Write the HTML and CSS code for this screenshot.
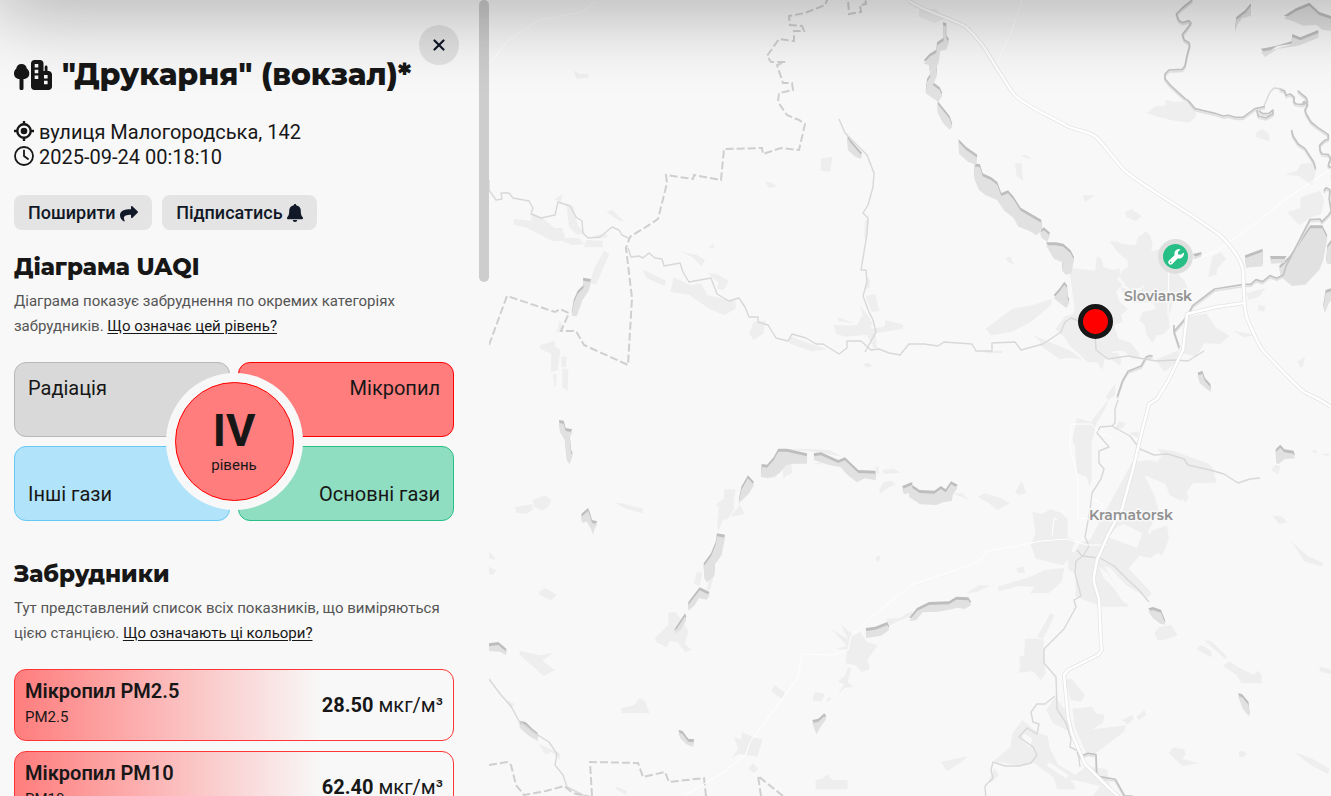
FILE: index.html
```html
<!DOCTYPE html>
<html lang="uk">
<head>
<meta charset="utf-8">
<title>"Друкарня" (вокзал)*</title>
<link rel="stylesheet" href="styles.css">
</head>
<body>
<div class="app">
  <aside class="panel">
    <div class="panel-content">
      <button class="close" type="button" aria-label="Закрити">
        <svg viewBox="0 0 12 12" width="12" height="12"><path d="M1.500 1.500l9 9M10.500 1.500l-9 9" fill="none" stroke="currentColor" stroke-width="2.200" stroke-linecap="round"/></svg>
      </button>
      <h1 class="title">
        <svg class="title-icon" viewBox="0 0 38 30" width="38" height="30"><path fill="currentColor" fill-rule="evenodd" d="M7.500 4c3 0 5 2 5.300 4.500 1.700 1.200 2.500 3 2.500 5 0 3.200-2.400 5.500-5.500 5.500h-.3v9.200a2 2 0 0 1-4 0V19h-.3C2.300 19 0 16.700 0 13.500c0-2 .8-3.800 2.300-5C2.600 6 4.500 4 7.500 4zM20.500 0h5.500c2 0 3.500 1.500 3.500 3.500V11h1.200V7a1.400 1.400 0 0 1 2.800 0v4h1c1.900 0 3.500 1.600 3.500 3.500v12c0 2-1.500 3.500-3.500 3.500h-14c-2 0-3.500-1.500-3.500-3.500v-23C17 1.500 18.500 0 20.500 0zm.2 4v3.600h3.600v-3.600zm0 5.700v3.600h3.600v-3.600zm0 5.700v3.600h3.600v-3.600zM30 15v3.600h3.600v-3.600zm0 5.700v3.600h3.600v-3.600z"/></svg>
        "Друкарня" (вокзал)*</h1>
      <div class="meta">
        <p><svg viewBox="0 0 20 20" width="20" height="20"><g fill="none" stroke="currentColor" stroke-width="2.400"><circle cx="10" cy="10" r="6.700"/><path d="M10 0v4M10 16v4M0 10h4M16 10h4"/></g><circle cx="10" cy="10" r="3.300" fill="currentColor"/></svg> вулиця Малогородська, 142</p>
        <p><svg viewBox="0 0 20 20" width="20" height="20"><g fill="none" stroke="currentColor" stroke-width="1.800" stroke-linecap="round"><circle cx="10" cy="10" r="9"/><path d="M10 4.500V10l4 3"/></g></svg> 2025-09-24 00:18:10</p>
      </div>
      <div class="actions">
        <button class="action" type="button">Поширити <svg viewBox="0 0 18 16" width="18" height="16"><path fill="currentColor" d="M11 .8c0-.8.8-1 1.300-.6l5.300 5.100c.5.500.5 1 0 1.500l-5.300 5.100c-.5.500-1.300.2-1.300-.6V8.800C6.500 8.800 4 9.800 3.900 12c0 1.300.5 2 .8 2.700.2.600-.4 1-.9.600C1.500 13.800 0 11.900 0 9.400 0 4.800 4 3.400 11 3.300z"/></svg></button>
        <button class="action" type="button">Підписатись <svg viewBox="0 0 16 18" width="16" height="18"><path fill="currentColor" d="M8 0c.7 0 1.200.5 1.200 1.200 2.800.5 4.600 2.600 4.600 5.600 0 4.200 1 5.400 1.900 6.500.7.900.1 1.900-.9 1.900H1.200c-1 0-1.600-1-.9-1.900C1.200 12.200 2.200 11 2.200 6.800c0-3 1.800-5.100 4.600-5.600C6.800.5 7.300 0 8 0zM5.800 16h4.400c0 1.200-1 2-2.200 2s-2.200-.8-2.200-2z"/></svg></button>
      </div>

      <section class="section">
        <h2 class="heading">Діаграма UAQI</h2>
        <p class="note">Діаграма показує забруднення по окремих категоріях забрудників. <a href="#level">Що означає цей рівень?</a></p>
        <div class="diagram">
          <div class="cell radiation">Радіація</div>
          <div class="cell dust">Мікропил</div>
          <div class="cell other-gas">Інші гази</div>
          <div class="cell main-gas">Основні гази</div>
          <div class="level"><strong>IV</strong><span>рівень</span></div>
        </div>
      </section>

      <section class="section">
        <h2 class="heading">Забрудники</h2>
        <p class="note">Тут представлений список всіх показників, що виміряються цією станцією. <a href="#colors">Що означають ці кольори?</a></p>
        <ul class="pollutants">
          <li class="card"><div><h3>Мікропил PM2.5</h3><small>PM2.5</small></div><p><b>28.50</b> мкг/м³</p></li>
          <li class="card"><div><h3>Мікропил PM10</h3><small>PM10</small></div><p><b>62.40</b> мкг/м³</p></li>
        </ul>
      </section>
    </div>
    <div class="track"><div class="thumb"></div></div>
  </aside>

  <main class="map">
    <svg class="tiles" viewBox="489 0 842 796" preserveAspectRatio="xMinYMin slice" aria-label="Мапа">
      <defs>
        <g id="woods">
          <g transform="translate(489 0) scale(.3333)">
            <path d="M282 833l24 4-6 25-20 30-14 40-4 8-14-2 6-38 12-28 18-18z"/>
            <path d="M1075 403l8 14 20 23 16 18-4 10-18-8-20-18z"/>
          </g>
          <g transform="translate(909 0) scale(.3333)">
            <path d="M102 67l10 3v36l8 12-8 22-20 5-2 30-8 20 2 22-12 30 20 14 8 18-12 18-38-26 4-34 10-16-4-34-16-6 18-20 20-12 2-22 20-14z"/>
            <path d="M86 303l20 25 16 20 8 24-8 8-20-20-16-30z"/>
            <path d="M149 418l22 22 34 24-4 22-24-10-27-24zM197 490l16 3 8 27 26 12 18 14 12 33 20-8 16 18 22 34 62 36 1 24-16 14-22-14-32-12-14-26-28-22-22-32-34-14-20-16-14-34zM393 690l12-8 18 16-8 18-16-10zM411 727l30 0 22 4 22 20 10 20-8 40-16 4-12-12 2-25-26-10z"/>
            <path d="M466 845l8 10 2 32 5 12-8 16-14-10-25-20 18-20z"/>
            <path d="M1026 10v28l-26 8-14 18-8 25 4-38 26-20zM1125 47l36-22 40-17 30 28 35 12v36l-26-4-18-14-40 2-32-14zM1056 146l44-8 48-14 2-22 24 10 54-22v14l-60 24-64 10-36 24z"/>
            <path d="M1008 766l53-20v44l-50 4zM1083 768h50l-8 12-38 2zM1204 676l36 0 15 30-12 65-12 30-42 44-40 4-34-28-4-24 30-28 30-44zM1255 735l15-20v70l-18-4zM1250 870l20-6v24l-10 12-12 30-5-14z"/>
            <path d="M866 1118l14-6 8 22 16 18 2 16-16-12-18-16zM852 762l26-6-2 9-18 6z"/>
          </g>
          <g transform="translate(489 400) scale(.3333)">
            <path d="M210 60l14 2 6 22 20 4-8 16 4 44 5 12-10 24-8-14-6-60-14-22zM277 342l20-18 6 14 6 22 16 4-10 16-2 16-8-20-12-20-14 3z"/>
            <path d="M818 192l16 2 20-22 14-26h26l60 14v22h-40l-22 4-20 24-16 10-20 5-20-3zM974 160l22-3 52 23 20-8 40 38 52 2v20l-32-6-24 12-28-22-22-24-34-6-44-14zM777 226l18 20-14 24-32 32 8-42zM1240 258l30-12v22l-26 6z"/>
            <path d="M684 400l24 4-10 52-20 28-2 34-22 20-8-12-2-36 22-30 14-34zM632 562l30 14-8 14-24-4-14 22-18 16v-18zM588 640l4 10-16 30-22 12z"/>
            <path d="M0 730l28-4 24 20v10l-20-10-32-2zM92 962l18 4 22 22 14 10v16l-26-15-28-25zM568 990l12 2 18 24 18 2-4 14-20-8-18-18zM970 960l18-4 18-16 6 8-16 22-14 24zM1131 684l28-4 36-14 6 14-24 18-46 7z"/>
          </g>
          <g transform="translate(909 400) scale(.3333)">
            <path d="M0 248l32 22 44 2 20-14 14 10 16-24 20 10-14 20-4 20-26 4-20 8-48-2-34-22zM0 654l24-30 36-18 60-2 22-14 36 2 9 14-20 12-22-4-24 6-32 6-48 2-20 24z"/>
            <path d="M718 625l14-4 24 8 14 36-16-3-22-16zM987 880l12 2 20 24 3 36-20-24zM1100 148l14-14 12 14 28 4 4 14-30 2-20 16-6-4z"/>
          </g>
        </g>
        <g id="creeks" fill="none" stroke-linejoin="round">
          <g transform="translate(909 0) scale(.3333)" stroke-width="5">
            <path d="M850 0l-30 24-18 18 8 20 12 6 18-6 6 8-12 16-14 18 6 16 14 8 2 10-8 30-6 30-8 10-40 2-12 12v14l18 22 42 38 10 6 20 24 60 14 24 8 16-2 20 6h24l36-26 30-6"/>
            <path d="M1112 268l14 4 6 14 12-4 12 10-2 14 8 6 16 2 8-10 10 10-8 16 4 12 14 24 20 16 32 22v14l-12 4-14 14 2 18 6 8 18 2 8 12-6 12-2 10 12 8-2 28M1148 390l4 18 16 24 20 14 26 40 6 20"/>
            <path d="M1044 330l4 18 22 6 22-12v-12l-12 10-18 1-12-8M1166 272l26 22 4 12-14 8"/>
            <path d="M795 995l26-30 18-24 12-24 66-50 88-14 20 0 16-14 20 6 22-18 20 8 20-10 8-26 72-140 30-2 6 8 20-20 8-12-6-36 2-28-12-6-6 10M795 975v20l16 48M625 1190l16-48 16-28 40-16 14-26 10-5 10 1"/>
          </g>
          <g transform="translate(909 400) scale(.3333)" stroke-width="5"><path d="M505 1056l8 14 24-10 24 4 2 56 8 10 48 8 28 50h24"/></g>
        </g>
        <g id="roads" fill="none" stroke-linejoin="round">
          <path d="M909 1c18 12 43 17 57 26 20 18 25 34 36 49 5 8 10 18 16 22 17 13 32 18 49 28 10 5 20 4 29 11 12 12 20 25 29 34 25 20 60 38 96 65 14 14 20 24 22 34 1 15 0 35 4 48 4 10 10 25 17 34 15 15 28 30 40 40 8 4 18 8 27 15"/>
          <path d="M1244 303l-28 4-29 7-1 10-3 26-15 31-11 18-8 5-7 27-9 38-11 40-14 26-11 25-3 16 0 6 5 17 2 45 1 6-4 5-30 15-4 5 4 42 4 17 13 30 24 24 39 35"/>
        </g>
      </defs>

      <g class="land">
        <g transform="translate(489 0) scale(.3333)">
          <path d="M74 656l52 6 4-24 36 20 30 26 24 0 8 30 42 0 16 18-36 4-30-14-30 2-52-28-30-14-34-8zM232 612l22 6 12 58 22 24-24 4-24-24zM284 742l8-22 50 2-2 20zM320 706l32-6 4 12-30 4zM352 636l18-6 34 32-10 2zM346 752l15 10-40 92-18-6 12-42zM196 598l26-16-8 24zM253 210l16 12 30 0v10l-36 4z"/>
          <path d="M460 808l72 34-6 16-54-24zM544 876l10-44 52 24 30-6 20 36 84 18 0 22-34 20-46-20-60-42-36-6zM574 755l50 10 24 14-10 20-28-28zM656 820l26 2 38 20-16 28-20-4 4-18zM657 742l18-10 0 12zM996 476l35-6-8 45-28-2zM828 547l18 0 18 12-22 6zM780 1000l14-34 36-4-6 38-30 20zM900 1008l56 20 60 20-50 6-66-24zM1034 976l70 0 16-30 30 40 36-6 4-20 54 14-4 12-80 14 4 44-10 0-20-40-64 6-28-8zM1048 952l46 18-46-8zM1130 888l28-6 14 50-24 4zM1112 914l30 40 10 20-20 6zM1124 1092l16-4 10 12-20 2zM1128 660h12l-8 55h-6zM1132 832l12 8-2 24-16 4z"/>
          <path d="M152 1036l46-14 0 18 16 10-8 60-20 6 0-54-30-14zM218 1068l16 4-4 30h-12zM220 1106l18 0-2 66-16-10zM192 1122l10 0 0 36h-6zM212 960l10 22-20 20z"/>
        </g>
        <g transform="translate(909 0) scale(.3333)">
          <path d="M30 30l50-4 26 30-30 14-46-20zM714 338l22-18 34-4 0-16 30 6 24-2 34 20 4 24-20 20-46-6-60-14zM1040 400l20-14 22 18-2 20-38-12zM1128 524l36-12 12-20 34-4 10 32-10 36-40-28zM1134 636l40-12 0-32 60-20 12 30-10 40-24 8-42 26zM336 466l16-2 16 12-12 0zM318 490l20 0 4 54-20-18zM520 586l38 0-30 20zM648 636l20-8 30 20-18 16-28-14zM290 776l12-8 16 28-20-10z"/>
          <path d="M230 986l80-60 60-10 60-20-4 20-60 50-60 30-60 10zM370 1004l110 46 40 28-70-6zM832 950l60-10 30 44 40 24-30 24-46-2-24 40-40-10zM898 830l12-60 24-14 18 20-26 28-4 20zM972 992l44 8 18 6-30 6zM1010 880l60-16-20 26-30 10zM1048 914l20 4-2 18-18-6zM1166 1084l22-14-6 30-10 2zM230 1052h52l-4 8h-50zM740 1080l70-30-10 40-34 26zM590 1190l30-40-2 36-20 14z"/>
        </g>
        <g transform="translate(1040 220) scale(.3333)">
          <path d="M208 64l20 0 20 8 38 4 8-24 24-18 12 12 8 24-4 24 26-6 12 20 30 40-4 30-36 2-14 22-28-14-20 16-32 4-28-34 4-18 20-16-2-20-26-20z"/>
          <path d="M86 142l26 4 54 6 4-42 14 4 6 26 26 10 22-4 4 20-12 12 18 16-20 20 10 30 26 24-20 16 4 22-26 10 14 40 36 12 24 30 4 20-24-2-24-24-32 2-26 26-8 30-12-22-32-2-20-20-30-26-20-30-26-22 30-40 24-6 4-20z"/>
          <path d="M306 150l50-10 14 14 30-8 14 16 20 20 10 26-20 24-24 12-14 44 2 36-20 20-18 2-12 22-18-22-6-30-16-16 10-24 40-10-10-20-60 4 10-30 24-20z"/>
          <path d="M0 364l40 16 60 30-40 8-60-42zM150 402l84-4 10 22-4 18-26-20zM240 200l20 6-10 16z"/>
        </g>
        <g transform="translate(489 400) scale(.3333)">
          <path d="M78 322l50-10 6 14-20 16-32-4zM132 300l36-14 18 14-6 18-20 14-26-12zM378 308l20 2 64 16-2 14-50-14zM0 456l18 16-2 8-16-6zM0 500l22 10-10 14-12-2zM150 576l18-12 36 20-18 18-34-18zM92 752l60 14 42-8-34 24 38 28-34 18-72-64zM396 924l38-8 18-22 16 10 14 36-84 0zM378 1166l8-6 28 14-2 10zM846 874l12-18 30 22-10 18zM972 890l6-14 30 6-10 22-26-2zM1012 900l10-10 4 8-8 8zM1158 476l10-10 8 8-10 12zM980 1140l20-4 16-14 14 18 46 0v28h-96zM735 1010l22 10 2-24 34 16 28 6-16 52-26-4-30-4-20 12 18-28zM778 1106l14-18 16 18-12 14zM50 900l28 12-14 14zM146 1030l44 20 24 10-2 20-24-24-18 8z"/>
          <path d="M706 268l34 0-6 36 2 22-20 32-14 2-14 34-4-16 6-58-10-6 24-18zM722 350l32-36 12 28-28 6zM614 550l10-34 16 2-8 40zM664 522l14-4-14 50-12 4zM498 714l40-40 0-36 22-2 20 26 18 30-10 40 20 18-20 6-22-30-24-4-8 20-32-16zM880 200l26-10 4 30-20 8-6 12zM830 236l40-18-10 14zM890 148l50-2 80 4 40 20-80-14zM1180 210l34-4 22 12-50 4zM1158 200l12 0-2 30zM1170 270l14-24 24-4 12 12-20 8-26 20zM974 190l30-4-14 8z"/>
          <path d="M1070 790l4-40-30-4 30-8-46-50 50 30-24-46 40 34 20-10 20 30 32 10-30 42 6 30-24 8-18-20zM1046 886l20-34-20-6 22-20 10-26 8 6-10 40 18 14-28 4zM1194 656l40-2 20-14 18-6-4 14-50 20-24 12z"/>
        </g>
        <g transform="translate(909 400) scale(.3333)">
          <path d="M598 0l-22 26-30 40-30-8-12-4-14 66 8 20 6 80 28 10 10 30 6-20 0-110 14-60 30-50zM616 90l14-26 22 6-12 14zM660 100l28-6 0 20z"/>
          <path d="M670 186l54-6 20 6 16-20-14-20 44 6 106 38 16 14 10 44-70 2-14 20-4 8-18 24-34-16-12-34-64-26 30 60 14 50-30 60 54-20 6 40-20 50-14-8-20 16-36-6-32 38 40 40 30 34-12 14-66-40-46-50-18-6 60 106 14 16-80 0-80-30 0-70-20-10-6-46 24-10 16-26 30-10z"/>
          <path d="M370 336l30 6 24-14 32 10 20 20 0 54 24 10-20 50-16 24-84-20-14-40 14-36zM364 580l12-20-46-2-60 16-4-14 100-30 40-20 60-6-8 42-40 34zM322 504l22-4 4 18-22 0zM170 580l40-24 34 0-40 20zM206 290l20-10 50 14 26 16-36 20-26-20zM318 278l20-36 14 38-20 4zM130 280l30 0 20 20zM814 290l12-14 14 14-10 18z"/>
          <path d="M736 700l14-18 36-8 20 32-40 14-20 0zM1086 210l14-16 14 4-6 26zM1090 346l30 4 16 18-26 4zM1146 422l50 46 48 22-4 10-54-16-20-32zM1206 154l14-4 6 12zM862 748l14-14 32 20 0 18zM884 720l24 4 46 46-4 8zM942 798l20-14 30 20 42 20 14-12 10 12 0 26-60 0-16-26zM1230 800l36 8v14l-30-6zM780 1060l12-18 34 6 4 14-10 14 50 14-50 8zM990 1056l12-4 12 10-14 12-10-6zM1156 1056l50 18 56 32-6 16-50-26zM96 1086l80-18-14 16-48 30zM1236 164l26-4-4 8z"/>
          <path d="M384 712l40-72 12 6-20 44-14 24zM348 716l56 0 0 44 6 60-14 20-24-26-44 4 6-20-4-28 16-4zM466 840l22-4 40 50-12 20-30-6zM412 930l26-38 36 44 18 50-20 4-40-20zM490 926l60-6 10 20 26 4-4 24-30 20 100-12-8 20-74 56-26 20-16-20-30-70zM640 960l30-16 4 12-18 18zM682 950l24-20 6 14-22 16zM340 960l-30 40-6 40-50 44 80 14 40-10 60 44 10 36 60 0-20-30 90 20-30 40 100 20-40-50-10-60-60-10-36 26-50-30-26-50-6-36-30-10zM236 1150l20-46 14 20-20 22z"/>
        </g>
      </g>
      <g class="clearing" transform="translate(909 400) scale(.3333)">
        <path d="M624 380l20-8 56 28-16 44-86-32zM716 396l22-40 10 4-26 44zM570 500l26 20 32 50 24 36-8 2-30-44-30-30zM340 1000l30 14-6 30-22-20zM420 1086l60 40-8 10-60-40zM500 1140l20 8-20 20z"/>
      </g>

      <g class="woods-shade"><use href="#woods"/></g>
      <g class="woods-fill"><use href="#woods" y="3"/></g>
      <g class="creek-fill"><use href="#creeks" y="2"/></g>
      <g class="creek-shade"><use href="#creeks"/></g>

      <g class="rivers">
        <path d="M489 180l0 10 7 10 6-1-1-6 8 0 4 5 16 3 4 7-2 6 10 4 14-3 3-13 12 4 6 11 6 4 1 12 5 5 12-1 12-10 7 3 3 5 8 4 M628 248l3 9 8-1 4 2 6-5 6 5 7 1 2 7 16-3 3 9 6 10 22-4 6 16 12 7 10-3 6 9 4 10 9 0 0 5 10 3 8 13 12 3 4-7 14 4 10 6 7 0 16 10 8-6 0-7 14 0 10 9 8-1 10 4 11 2 9-11 15 0 14 2 6-4 28 2 4 7 16 0 0-8 23-1 6 8 22-6 18-12 4-10 6-4 14 5 10 10 1 17 12 9 20-3 28 5 20-1 12 1 16-10"/>
        <path d="M839 119l6 14 22 22 7 18-1 14-5 18-5 8 5 5-1 16-6 36 5 0 1 12-4 14 6 16 4 8 3 12-11 20"/>
        <path d="M489 679l12 16 10 11 8 15 14 11 16 10 8 12-2 11 8 10 4 12 20 10M1264 106l6-14 4-4 8 1"/>
        <path d="M1118 400l-3 9 0 14-3 3-12 1-3 6 12 14-10 4 0 12 5 6-3 10-9 14-2 17-5 27 4 9-6 10-7 5-1 12 6 23-7 4 2 7-12 22-20 20 0 14 12 14 1 32 9 14 5 16-1 8 8 4 2 16M1112 426l18 10 10 13 14 6 14-1 16 5 4 6 22 5 14 4 14 9 12-4 10-1M1077 550l5 6 18 2 14 8 15 15 9 8 11 13M1055 696l-10 8-8 0-6 8 2 10 6 2-2 10-10-6-8 9 14 10 4 8-6 8-12 3-14 0-12-4-2 8 2 8-8 8 1 14"/>
      </g>

      <g class="borders">
        <path d="M489 345l18-49 48 16 5-3 9 4-8 18 15 0 8 14 44 20 4-67-6-50 4-11 1-1 15-9 12-8 9-36-1-8 27 4 1-4 27 5 3-31 38-1 1 6 18-6 18 2 6-26-6-4-12-5-9-13 1-9 14-3-1-7-9 0-6-18 8-3-14 0-4-6 12-17 15 2 0-10 10 0-2-5-12-1-1-9 16-3 20-8 5-12 18 7 1 14 12-2-1-7 6-1-2-13"/>
        <path d="M489 765l18-3 4 3 5 20 8 10 22-4 18-5 9 7 18 4M592 796l-2-34 48 1 5 14 22-5 4 10 35-4 2 18M761 796l-3-20 25 20"/>
      </g>

      <g class="minor-roads">
        <path d="M489 64l20-24 30-20 42-8 14-10M1022 0l-10 30-16 35M1190 262l28-12 34-24 30-24 50-34M1169 260l-1 55M684 796l40-24 22-18 4-12 48-64 4-24 28 1 18-5 3-14 16-15 44-36 18-6 30-10 20-7 8-11 30-5 24-5 26-2 20 6 20 0M1092 498l10 6-4 16-20-2 0-40-8-30 1-24h20l10 10 12 4M1057 520l-3-2-2 18"/>
      </g>
      <use class="road-edge" href="#roads"/>
      <use class="road-core" href="#roads"/>

      <text class="city" x="1124" y="301">Sloviansk</text>
      <text class="city" x="1089" y="520">Kramatorsk</text>
    </svg>
    <button class="pin offline" type="button" aria-label="Станція на обслуговуванні"><svg viewBox="0 0 16 16" width="16" height="16"><path fill="#fff" fill-rule="evenodd" d="M15.200 3.900c.2-.3.500-.2.600.1a4.600 4.600 0 0 1-5.900 5.300l-5.600 5.600a2.300 2.300 0 0 1-3.300-3.300l5.700-5.500A4.500 4.500 0 0 1 12 .2c.4.100.4.400.2.600L9.900 3.100l.3 2.300 2.500.4zM2.700 12.500a.8.8 0 1 0 0 1.600.8.800 0 0 0 0-1.600z"/></svg></button>
    <button class="pin active" type="button" aria-label="Друкарня (вокзал)"></button>
  </main>
  <div class="topbar-shadow"></div>
</div>
</body>
</html>
```
FILE: styles.css
```css
* { box-sizing: border-box; }

body {
  margin: 0;
  background: #f8f8f8;
  color: #171717;
  font: 20px/25px Roboto, "Noto Sans", sans-serif;
}

h1, h2, h3, p, ul { margin: 0; padding: 0; }
button { font: inherit; color: #111827; border: 0; cursor: pointer; }

.app {
  position: relative;
  display: flex;
  height: 100vh;
  overflow: hidden;
}

/* Station panel */
.panel {
  display: flex;
  flex: 0 0 489px;
  overflow: hidden;
}

.panel-content {
  position: relative;
  flex: 1;
  padding: 55px 25px 0 14px;
}

.track { flex: 0 0 10px; }
.thumb { height: 35.4%; border-radius: 5px; background: #cdcdcd; }

.close {
  position: absolute;
  top: 25px;
  right: 20px;
  display: grid;
  place-items: center;
  width: 40px;
  height: 40px;
  padding: 0;
  border-radius: 50%;
  background: #e2e2e2;
}

.title {
  display: flex;
  align-items: center;
  gap: 10px;
  font: 800 30px/40px Montserrat, Inter, sans-serif;
  white-space: nowrap;
}

.meta { margin-top: 25px; }
.meta svg { vertical-align: -2px; }

.actions { display: flex; gap: 10px; margin-top: 25px; }

.action {
  height: 35px;
  padding: 0 14px;
  border-radius: 8px;
  background: #e4e4e4;
  font-size: 18px;
  font-weight: 500;
  white-space: nowrap;
}
.action svg { vertical-align: -3px; }

.section { margin-top: 22px; }
.section + .section { margin-top: 38px; }

.heading { font: 800 23px/30px Montserrat, Inter, sans-serif; }

.note {
  margin-top: 7px;
  color: #555;
  font-size: 15px;
}
.note a { color: #171717; text-underline-offset: 2px; }

.diagram {
  position: relative;
  display: grid;
  grid-template-columns: 1fr 1fr;
  gap: 9px 8px;
  margin-top: 23px;
}

.cell {
  display: flex;
  height: 75px;
  padding: 13px;
  border: 1px solid;
  border-radius: 12px;
}
.radiation { background: #d9d9d9; border-color: #b8b8b8; }
.dust { justify-content: flex-end; background: #ff7d7d; border-color: #f00; }
.other-gas { align-items: flex-end; background: #b1e4fa; border-color: #66c8f5; }
.main-gas { justify-content: flex-end; align-items: flex-end; background: #90dec1; border-color: #27bf85; }

.level {
  position: absolute;
  inset: 0;
  display: flex;
  flex-direction: column;
  align-items: center;
  justify-content: center;
  width: 119px;
  height: 119px;
  margin: auto;
  border: 1px solid #f00;
  border-radius: 50%;
  background: #ff7d7d;
  box-shadow: 0 0 0 9px #f8f8f8;
}
.level strong { font-size: 45px; line-height: 46px; }
.level span { font-size: 15px; line-height: 22px; }

.pollutants { display: grid; gap: 10px; margin-top: 23px; list-style: none; }

.card {
  display: flex;
  align-items: center;
  justify-content: space-between;
  height: 72px;
  padding: 0 10px;
  border: 1px solid #ff3535;
  border-radius: 12px;
  background: linear-gradient(90deg, #ff7d7d, #f8f8f8 70%);
}
.card h3 { font-size: 20px; font-weight: 600; line-height: 25px; }
.card small { display: block; font-size: 15px; line-height: 27px; }
.card b { font-weight: 700; }

/* Map */
.map { position: relative; flex: 1; overflow: hidden; }
.tiles { display: block; width: 100%; height: 100%; }

.land { fill: #eee; }
.clearing { fill: #f8f8f8; }
.woods-shade { fill: #bebebe; }
.woods-fill { fill: #e1e1e1; }
.creek-shade { stroke: #c3c3c3; }
.creek-fill { stroke: #e1e1e1; }
.rivers { fill: none; stroke: #d8d8d8; stroke-width: 1.4px; stroke-linejoin: round; }
.borders { fill: none; stroke: #cfcfcf; stroke-width: 2px; stroke-dasharray: 8 3; }
.minor-roads { fill: none; stroke: #fff; stroke-width: 1px; }
.road-edge { stroke: #e4e4e4; stroke-width: 4px; }
.road-core { stroke: #fff; stroke-width: 2.500px; }

.city {
  fill: #919191;
  stroke: #f8f8f8;
  stroke-width: 3px;
  paint-order: stroke;
  font: 600 14px Montserrat, Inter, sans-serif;
}

.pin {
  position: absolute;
  display: grid;
  place-items: center;
  width: 35px;
  height: 35px;
  padding: 0;
  border: 5px solid;
  border-radius: 50%;
}
.offline { left: 669px; top: 239px; background: #27bf85; border-color: #dfdfdf; }
.active { left: 589px; top: 304px; background: #f00; border-color: #171717; }

.topbar-shadow {
  position: absolute;
  top: -80px;
  left: -10px;
  right: -80px;
  height: 80px;
  border-radius: 20px;
  box-shadow: 0 10px 80px rgba(0, 0, 0, .32);
  pointer-events: none;
}
```
